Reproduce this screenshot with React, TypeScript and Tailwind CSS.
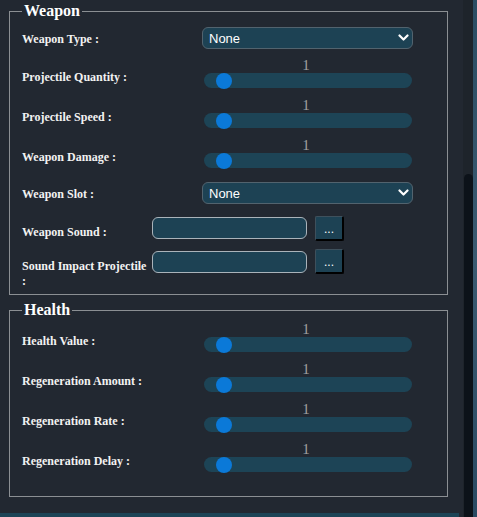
import React from "react";

const labelCls =
  "font-['Liberation_Serif',serif] font-bold text-[12px] leading-[15px] text-[#f2f2f2]";

function SliderRow({ label }: { label: string }) {
  return (
    <div className="flex items-start">
      <div className={`w-[182px] mt-[12px] ${labelCls}`}>{label}</div>
      <div className="flex flex-col">
        <div className="w-[204px] h-[15px] text-center font-['Liberation_Serif',serif] text-[15px] leading-[15px] text-[#a0a0a0]">
          1
        </div>
        <div className="w-[208px] h-[15px] rounded-full bg-[#1d4456] flex items-center pl-[12px]">
          <div className="w-[16px] h-[16px] rounded-full bg-[#0b79d8] shrink-0" />
        </div>
      </div>
    </div>
  );
}

function SelectRow({ label }: { label: string }) {
  return (
    <div className="flex items-start">
      <div className={`w-[180px] mt-[5px] ${labelCls}`}>{label}</div>
      <div className="w-[211px] h-[22px] rounded-[6px] border border-[#52636e] bg-[#1d4254] flex items-center justify-between pl-[6px] pr-[3px]">
        <span className="font-['Liberation_Sans',sans-serif] text-[13px] leading-none text-white">
          None
        </span>
        <svg width="11" height="8" viewBox="0 0 11 8" fill="none">
          <polyline
            points="1.5,1.5 5.5,5.5 9.5,1.5"
            stroke="white"
            strokeWidth="2.2"
            strokeLinecap="round"
            strokeLinejoin="round"
          />
        </svg>
      </div>
    </div>
  );
}

function FileRow({
  label,
  labelMt,
  inputMt,
}: {
  label: string;
  labelMt: string;
  inputMt: string;
}) {
  return (
    <div className="flex items-start">
      <div className={`w-[128px] ${labelMt} ${labelCls}`}>{label}</div>
      <div
        className={`ml-[2px] ${inputMt} w-[155px] h-[22px] rounded-[6px] border border-[#aab3ba] bg-[#1d4254]`}
      />
      <div className="ml-[8px] w-[29px] h-[25px] rounded-[2px] bg-[#1d4254] border-t border-l border-t-[#3e505c] border-l-[#3e505c] border-r-2 border-b-2 border-r-black border-b-black flex items-center justify-center">
        <span className="font-['Liberation_Sans',sans-serif] text-[12px] leading-none text-white mt-[2px]">
          ...
        </span>
      </div>
    </div>
  );
}

function Legend({ children }: { children: React.ReactNode }) {
  return (
    <legend className="px-[2px] font-['Liberation_Serif',serif] font-bold text-[16px] leading-[20px] text-white">
      {children}
    </legend>
  );
}

export default function App() {
  return (
    <div className="w-[477px] h-[517px] overflow-hidden flex bg-[#222831]">
      <div className="w-[463px] h-full flex flex-col">
        <div className="flex-1 pt-[1px]">
          <fieldset className="ml-[9px] w-[439px] border border-[#8b8f93] pl-[12px] pb-[5px]">
            <Legend>Weapon</Legend>
            <div className="flex flex-col">
              <div className="mt-[6px]">
                <SelectRow label="Weapon Type :" />
              </div>
              <div className="mt-[9px]">
                <SliderRow label="Projectile Quantity :" />
              </div>
              <div className="mt-[10px]">
                <SliderRow label="Projectile Speed :" />
              </div>
              <div className="mt-[10px]">
                <SliderRow label="Weapon Damage :" />
              </div>
              <div className="mt-[14px]">
                <SelectRow label="Weapon Slot :" />
              </div>
              <div className="mt-[12px]">
                <FileRow label="Weapon Sound :" labelMt="mt-[9px]" inputMt="mt-[1px]" />
              </div>
              <div className="mt-[8px]">
                <FileRow
                  label="Sound Impact Projectile :"
                  labelMt="mt-[10px]"
                  inputMt="mt-[2px]"
                />
              </div>
            </div>
          </fieldset>
          <fieldset className="mt-[5px] ml-[9px] w-[439px] border border-[#8b8f93] pl-[12px] pb-[24px]">
            <Legend>Health</Legend>
            <div className="flex flex-col">
              <div className="mt-[2px]">
                <SliderRow label="Health Value :" />
              </div>
              <div className="mt-[10px]">
                <SliderRow label="Regeneration Amount :" />
              </div>
              <div className="mt-[10px]">
                <SliderRow label="Regeneration Rate :" />
              </div>
              <div className="mt-[10px]">
                <SliderRow label="Regeneration Delay :" />
              </div>
            </div>
          </fieldset>
        </div>
        <div className="w-[459px] h-[4px] bg-[#1d4456]" />
      </div>
      <div className="w-[10px] h-full flex flex-col bg-[#1e242b]">
        <div className="h-[174px]" />
        <div className="flex-1 ml-[1px] w-[9px] rounded-t-[5px] bg-[#0c1219]" />
      </div>
      <div className="w-[4px] h-full bg-gradient-to-b from-[#2b4d63] via-[#3b5a70] to-[#2a4a62]" />
    </div>
  );
}
